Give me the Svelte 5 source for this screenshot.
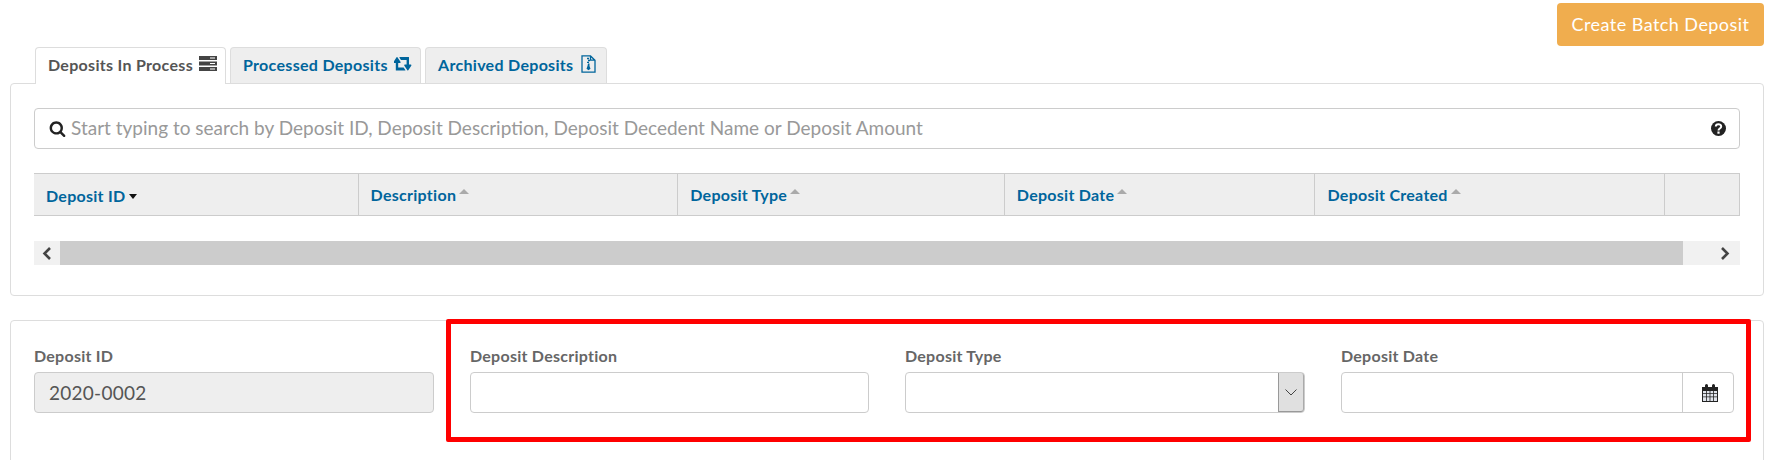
<script>
  const columns = [
    { label: 'Deposit ID', width: 325, active: true },
    { label: 'Description', width: 320 },
    { label: 'Deposit Type', width: 327 },
    { label: 'Deposit Date', width: 311 },
    { label: 'Deposit Created', width: 350 },
    { label: '', width: 74 }
  ];
</script>

<div class="page">
  <div class="topbar"><button class="create">Create Batch Deposit</button></div>

  <div class="tabs">
    <div class="tab current">
      Deposits In Process
      <svg class="ti" width="18" height="15" viewBox="0 0 18 15"><path fill="#444" d="M0 0h18v4H0zM0 5.500h18v4H0zM0 11h18v4H0z"/><path fill="#fff" d="M11 1.500h5v1h-5zM11 7h5v1h-5zM11 12.500h5v1h-5z"/></svg>
    </div>
    <div class="tab">
      Processed Deposits
      <svg class="ti" width="18" height="14" viewBox="-64 250 1920 1200" preserveAspectRatio="none"><path fill="#00659c" d="M1152 1376q0 13-9.500 22.500t-22.500 9.500h-960q-8 0-13.500-2t-9-7-5.500-8-3-11.500-1-11.500v-600h-192q-26 0-45-19t-19-45q0-24 15-41l320-384q19-22 49-22t49 22l320 384q15 17 15 41 0 26-19 45t-45 19h-192v384h576q16 0 25 11l160 192q7 10 7 21zm640-416q0 24-15 41l-320 384q-20 23-49 23t-49-23l-320-384q-15-17-15-41 0-26 19-45t45-19h192v-384h-576q-16 0-25-12l-160-192q-7-9-7-20 0-13 9.500-22.500t22.500-9.500h960q8 0 13.500 2t9 7 5.500 8 3 11.500 1 11.500v600h192q26 0 45 19t19 45z"/></svg>
    </div>
    <div class="tab">
      Archived Deposits
      <svg class="ti" width="15" height="18" viewBox="0 0 15 19" preserveAspectRatio="none"><path fill="none" stroke="#00659c" stroke-width="1.300" d="M1 1h8.500L14 5.500V18H1zM9.500 1v4.500H14"/><path fill="#00659c" d="M6 3h2v1.500H6zM7 5h2v1.500H7zM6 7h2v1.500H6zM7 9h1.500v2.500l1 3-2 1.500-2-1.500 1-3z"/></svg>
    </div>
  </div>

  <section class="panel first">
    <div class="search">
      <svg class="mag" width="17" height="17" viewBox="0 0 1792 1792"><path fill="#222" d="M1216 832q0-185-131.500-316.500t-316.500-131.500-316.500 131.500-131.500 316.500 131.500 316.500 316.500 131.500 316.500-131.500 131.500-316.500zm512 832q0 52-38 90t-90 38q-54 0-90-38l-343-342q-179 124-399 124-143 0-273.500-55.500t-225-150-150-225-55.500-273.500 55.500-273.500 150-225 225-150 273.500-55.500 273.500 55.500 225 150 150 225 55.500 273.500q0 220-124 399l343 343q37 37 37 90z"/></svg>
      <span class="ph">Start typing to search by Deposit ID, Deposit Description, Deposit Decedent Name or Deposit Amount</span>
      <svg class="help" width="15" height="15" viewBox="0 0 15 15"><circle cx="7.500" cy="7.500" r="7.500" fill="#222"/><path fill="none" stroke="#fff" stroke-width="2" d="M4.800 5.600c0-3.200 5.400-3.200 5.400-.1 0 2-2.700 1.900-2.700 3.900"/><rect x="6.400" y="10.500" width="2.200" height="2.200" fill="#fff"/></svg>
    </div>

    <div class="thead">
      {#each columns as c}
        <div class="th" class:active={c.active} style="width:{c.width}px">
          {c.label}
          {#if c.active}<i class="down"></i>{:else if c.label}<i class="up"></i>{/if}
        </div>
      {/each}
    </div>

    <div class="scrollbar">
      <div class="arrow"><svg width="10" height="13" viewBox="0 0 10 13"><path fill="none" stroke="#444" stroke-width="2.600" d="M8 1 2.500 6.500 8 12"/></svg></div>
      <div class="thumb"></div>
      <div class="arrow end"><svg width="10" height="13" viewBox="0 0 10 13"><path fill="none" stroke="#444" stroke-width="2.600" d="M2 1l5.500 5.500L2 12"/></svg></div>
    </div>
  </section>

  <section class="panel second">
    <div class="form">
      <div class="field">
        <span class="lbl">Deposit ID</span>
        <div class="ctl readonly">2020-0002</div>
      </div>
      <div class="field">
        <span class="lbl">Deposit Description</span>
        <div class="ctl"></div>
      </div>
      <div class="field">
        <span class="lbl">Deposit Type</span>
        <div class="ctl select">
          <div class="selbtn"><svg width="12" height="7" viewBox="0 0 12 7"><path fill="none" stroke="#444" stroke-width="1" d="M.5.500 6 6 11.500.500"/></svg></div>
        </div>
      </div>
      <div class="field">
        <span class="lbl">Deposit Date</span>
        <div class="ctl date">
          <div class="datebtn">
            <svg width="16" height="18" viewBox="0 0 16 18"><path fill="#222" d="M0 3h3V1.500a1.500 1.500 0 0 1 3 0V3h4V1.500a1.500 1.500 0 0 1 3 0V3h3v15H0z"/><path fill="#dfe3ea" d="M1 7h3v2.200H1zM4.800 7h2.800v2.200H4.800zM8.400 7h2.800v2.200H8.400zM12 7h3v2.200h-3zM1 10h3v2.500H1zM4.800 10h2.800v2.500H4.800zM8.400 10h2.800v2.500H8.400zM12 10h3v2.500h-3zM1 13.300h3V17H1zM4.800 13.300h2.800V17H4.800zM8.400 13.300h2.800V17H8.400zM12 13.300h3V17h-3z"/></svg>
          </div>
        </div>
      </div>
    </div>
    <div class="highlight"></div>
  </section>
</div>

<style>
  :global(body) { margin: 0; background: #fff; }
  .page {
    height: 460px;
    overflow: hidden;
    font-family: Lato, "Noto Sans", sans-serif;
    color: #5a5a5a;
  }
  .topbar { display: flex; justify-content: flex-end; padding: 3px 5px 0 0; }
  .create {
    width: 207px; height: 43px; border: 0; border-radius: 4px; padding: 0 0 2px;
    background: #f0ad4e; color: #fff; font: inherit; font-size: 18px; letter-spacing: .45px;
  }
  .tabs { display: flex; gap: 4px; margin: 1px 0 0 35px; position: relative; }
  .tab {
    height: 36px; padding: 0 8px 2px 12px; box-sizing: border-box; display: flex; align-items: center; justify-content: space-between;
    border: 1px solid #ddd; border-bottom: 0; border-radius: 4px 4px 0 0;
    background: #eee; color: #00659c; font-size: 16px; font-weight: 700; letter-spacing: .3px; white-space: nowrap;
  }
  .tab:nth-child(1) { width: 191px; }
  .tab:nth-child(2) { width: 191px; }
  .tab:nth-child(3) { width: 182px; padding-right: 10px; }
  .tab.current { background: #fff; color: #555; height: 37px; margin-bottom: -1px; position: relative; z-index: 1; padding-bottom: 3px; }
  .ti { flex: none; margin-top: -2px; }
  .panel {
    margin: 0 5px 0 10px; padding: 24px 23px; box-sizing: border-box;
    border: 1px solid #ddd; border-radius: 4px; position: relative;
  }
  .panel.first { height: 213px; }
  .panel.second { margin-top: 24px; height: 200px; padding: 0 23px; }
  .search {
    height: 41px; box-sizing: border-box; display: flex; align-items: center;
    border: 1px solid #ccc; border-radius: 4px; padding: 0 13px 0 14px;
  }
  .mag { margin-right: 5px; flex: none; }
  .ph { flex: 1; color: #999; font-size: 19px; white-space: nowrap; line-height: 1; padding-bottom: 2px; }
  .thead {
    display: flex; height: 43px; box-sizing: border-box; margin: 24px 0 0;
    background: #eee; border-top: 1px solid #ccc; border-bottom: 1px solid #ccc; border-right: 1px solid #ccc;
  }
  .th {
    box-sizing: border-box; padding-left: 12px; display: flex; align-items: center; gap: 3px;
    border-right: 1px solid #ccc; color: #00659c; font-size: 16px; font-weight: 700; letter-spacing: .27px; padding-bottom: 1px; white-space: nowrap;
  }
  .th.active { padding-top: 2px; gap: 4px; }
  .th:last-child { border-right: 0; }
  .up { width: 0; height: 0; border: 5px solid transparent; border-top: 0; border-bottom: 5px solid #aaa; margin-bottom: 5px; }
  .down { width: 0; height: 0; border: 4px solid transparent; border-bottom: 0; border-top: 5px solid #111; margin-top: 3px; }
  .scrollbar { display: flex; height: 24px; margin: 25px 0 0; background: #f1f1f1; }
  .arrow { width: 26px; display: flex; align-items: center; padding-left: 8px; box-sizing: border-box; }
  .arrow.end { width: 57px; justify-content: flex-end; padding: 0 10px 0 0; }
  .thumb { flex: 1; background: #ccc; }
  .form {
    display: grid; grid-template-columns: 400px 399px 400px 393px; column-gap: 36px;
    padding-top: 26px;
  }
  .lbl { display: block; height: 25px; font-size: 16px; font-weight: 700; letter-spacing: .25px; line-height: 17px; color: #666; white-space: nowrap; }
  .ctl {
    height: 41px; box-sizing: border-box; border: 1px solid #ccc; border-radius: 4px; display: flex;
  }
  .readonly { background: #eee; align-items: center; padding-left: 14px; font-size: 19px; letter-spacing: .25px; color: #555; }
  .select, .date { justify-content: flex-end; }
  .selbtn {
    width: 26px; box-sizing: border-box; background: #e0e0e0; border-left: 1px solid #999; border-right: 1px solid #aaa; border-bottom: 1px solid #999;
    border-radius: 0 3px 3px 0; display: flex; align-items: center; justify-content: center;
  }
  .datebtn { width: 51px; box-sizing: border-box; padding-left: 4px; border-left: 1px solid #ccc; display: flex; align-items: center; justify-content: center; }
  .highlight {
    position: absolute; left: 435px; top: -2px; width: 1305px; height: 123px; box-sizing: border-box;
    border: 5px solid #f00; border-radius: 2px; pointer-events: none;
  }
</style>
